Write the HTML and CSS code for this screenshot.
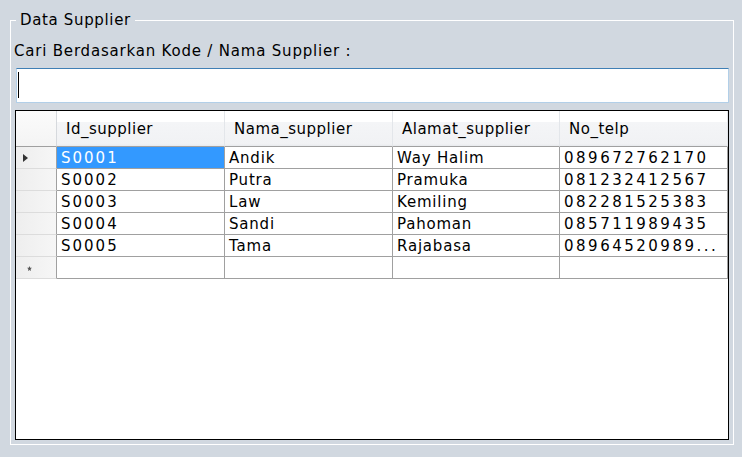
FILE: index.html
```html
<!DOCTYPE html>
<html lang="id">
<head>
<meta charset="utf-8">
<title>Data Supplier</title>
<link rel="stylesheet" href="styles.css">
</head>
<body>
<fieldset class="group">
  <legend class="group-title">Data Supplier</legend>
  <div class="search-label">Cari Berdasarkan Kode / Nama Supplier :</div>
  <div class="search-box"><span class="caret"></span></div>
  <div class="grid">
    <table class="grid-table">
      <thead>
        <tr>
          <th class="corner"></th>
          <th class="col-head w168">Id_supplier</th>
          <th class="col-head w168">Nama_supplier</th>
          <th class="col-head w167">Alamat_supplier</th>
          <th class="col-head w168">No_telp</th>
        </tr>
      </thead>
      <tbody>
        <tr>
          <td class="row-head"><span class="current-mark"></span></td>
          <td class="cell num-id selected">S0001</td>
          <td class="cell">Andik</td>
          <td class="cell">Way Halim</td>
          <td class="cell num-tel">089672762170</td>
        </tr>
        <tr>
          <td class="row-head"></td>
          <td class="cell num-id">S0002</td>
          <td class="cell">Putra</td>
          <td class="cell">Pramuka</td>
          <td class="cell num-tel">081232412567</td>
        </tr>
        <tr>
          <td class="row-head"></td>
          <td class="cell num-id">S0003</td>
          <td class="cell">Law</td>
          <td class="cell">Kemiling</td>
          <td class="cell num-tel">082281525383</td>
        </tr>
        <tr>
          <td class="row-head"></td>
          <td class="cell num-id">S0004</td>
          <td class="cell">Sandi</td>
          <td class="cell">Pahoman</td>
          <td class="cell num-tel">085711989435</td>
        </tr>
        <tr>
          <td class="row-head"></td>
          <td class="cell num-id">S0005</td>
          <td class="cell">Tama</td>
          <td class="cell">Rajabasa</td>
          <td class="cell num-tel">08964520989...</td>
        </tr>
        <tr>
          <td class="row-head"><svg class="new-mark" width="5" height="5" viewBox="0 0 5 5"><path d="M2.5 0 L3.2 1.7 L5 1.8 L3.6 3 L4 5 L2.5 3.9 L1 5 L1.4 3 L0 1.8 L1.8 1.7 Z" fill="#555"/></svg></td>
          <td class="cell"></td>
          <td class="cell"></td>
          <td class="cell"></td>
          <td class="cell"></td>
        </tr>
      </tbody>
    </table>
  </div>
</fieldset>
</body>
</html>
```
FILE: styles.css
```css
html, body {
  margin: 0;
  height: 100%;
}

body {
  background: #d1d8e0;
  font-family: "DejaVu Sans", sans-serif;
  font-size: 15px;
  color: #000;
  padding: 10px 0 0 10px;
  box-sizing: border-box;
}

.group {
  margin: 0;
  width: 724px;
  height: 435px;
  box-sizing: border-box;
  border: 1px solid #fff;
  padding: 0 4px 4px 4px;
  min-width: 0;
}

.group-title {
  margin-left: 1px;
  padding: 0 4px;
  line-height: 20px;
  letter-spacing: 0.65px;
}

.search-label {
  margin-top: 11px;
  line-height: 20px;
  letter-spacing: 0.8px;
  margin-left: -1px;
}

.search-box {
  margin-top: 7px;
  margin-left: 1px;
  width: 713px;
  height: 35px;
  box-sizing: border-box;
  background: #fff;
  border: 1px solid #b2cfe8;
  border-top-color: #3f7fb5;
  padding: 3px 0 0 1px;
}

.caret {
  display: block;
  width: 1px;
  height: 26px;
  background: #000;
}

.grid {
  margin-top: 7px;
  width: 714px;
  height: 330px;
  box-sizing: border-box;
  border: 1px solid #000;
  background: #fff;
}

.grid-table {
  border-collapse: separate;
  border-spacing: 0;
  table-layout: fixed;
  width: 712px;
}

.grid-table th,
.grid-table td {
  box-sizing: border-box;
  padding: 0;
}

.corner {
  width: 41px;
  height: 36px;
  background: linear-gradient(to bottom, #fbfbfb 0, #f4f4f4 100%);
  border-right: 1px solid #d6d9dd;
  border-bottom: 1px solid #a0a0a0;
}

.col-head {
  height: 36px;
  text-align: left;
  vertical-align: top;
  font-weight: normal;
  padding: 8px 0 0 9px !important;
  line-height: 20px;
  letter-spacing: 0.5px;
  white-space: nowrap;
  background: linear-gradient(to bottom, #ffffff 0, #ffffff 30%, #f4f5f7 32%, #f1f2f4 94%, #e8eaed 100%);
  border-right: 1px solid #e3e6ea;
  border-bottom: 1px solid #a0a0a0;
}

.w168 { width: 168px; }
.w167 { width: 167px; }

.row-head {
  height: 22px;
  background: linear-gradient(to right, #eeeeee 0, #f6f6f6 100%);
  border-right: 1px solid #a0a0a0;
  border-bottom: 1px solid #dcdcdc;
  padding-left: 7px !important;
  vertical-align: middle;
}

.current-mark {
  display: block;
  width: 0;
  height: 0;
  border-left: 5px solid #333;
  border-top: 4.5px solid transparent;
  border-bottom: 4.5px solid transparent;
  margin-top: 1px;
}

.new-mark {
  display: block;
  margin-left: 4px;
  margin-top: 1px;
}

.cell {
  height: 22px;
  vertical-align: top;
  padding: 1px 0 0 4px !important;
  line-height: 20px;
  letter-spacing: 0.8px;
  white-space: nowrap;
  overflow: hidden;
  border-right: 1px solid #a0a0a0;
  border-bottom: 1px solid #a0a0a0;
}

.num-id {
  letter-spacing: 2px;
}

.num-tel {
  letter-spacing: 2.5px;
}

.selected {
  background: #3399ff;
  color: #fff;
}
```
